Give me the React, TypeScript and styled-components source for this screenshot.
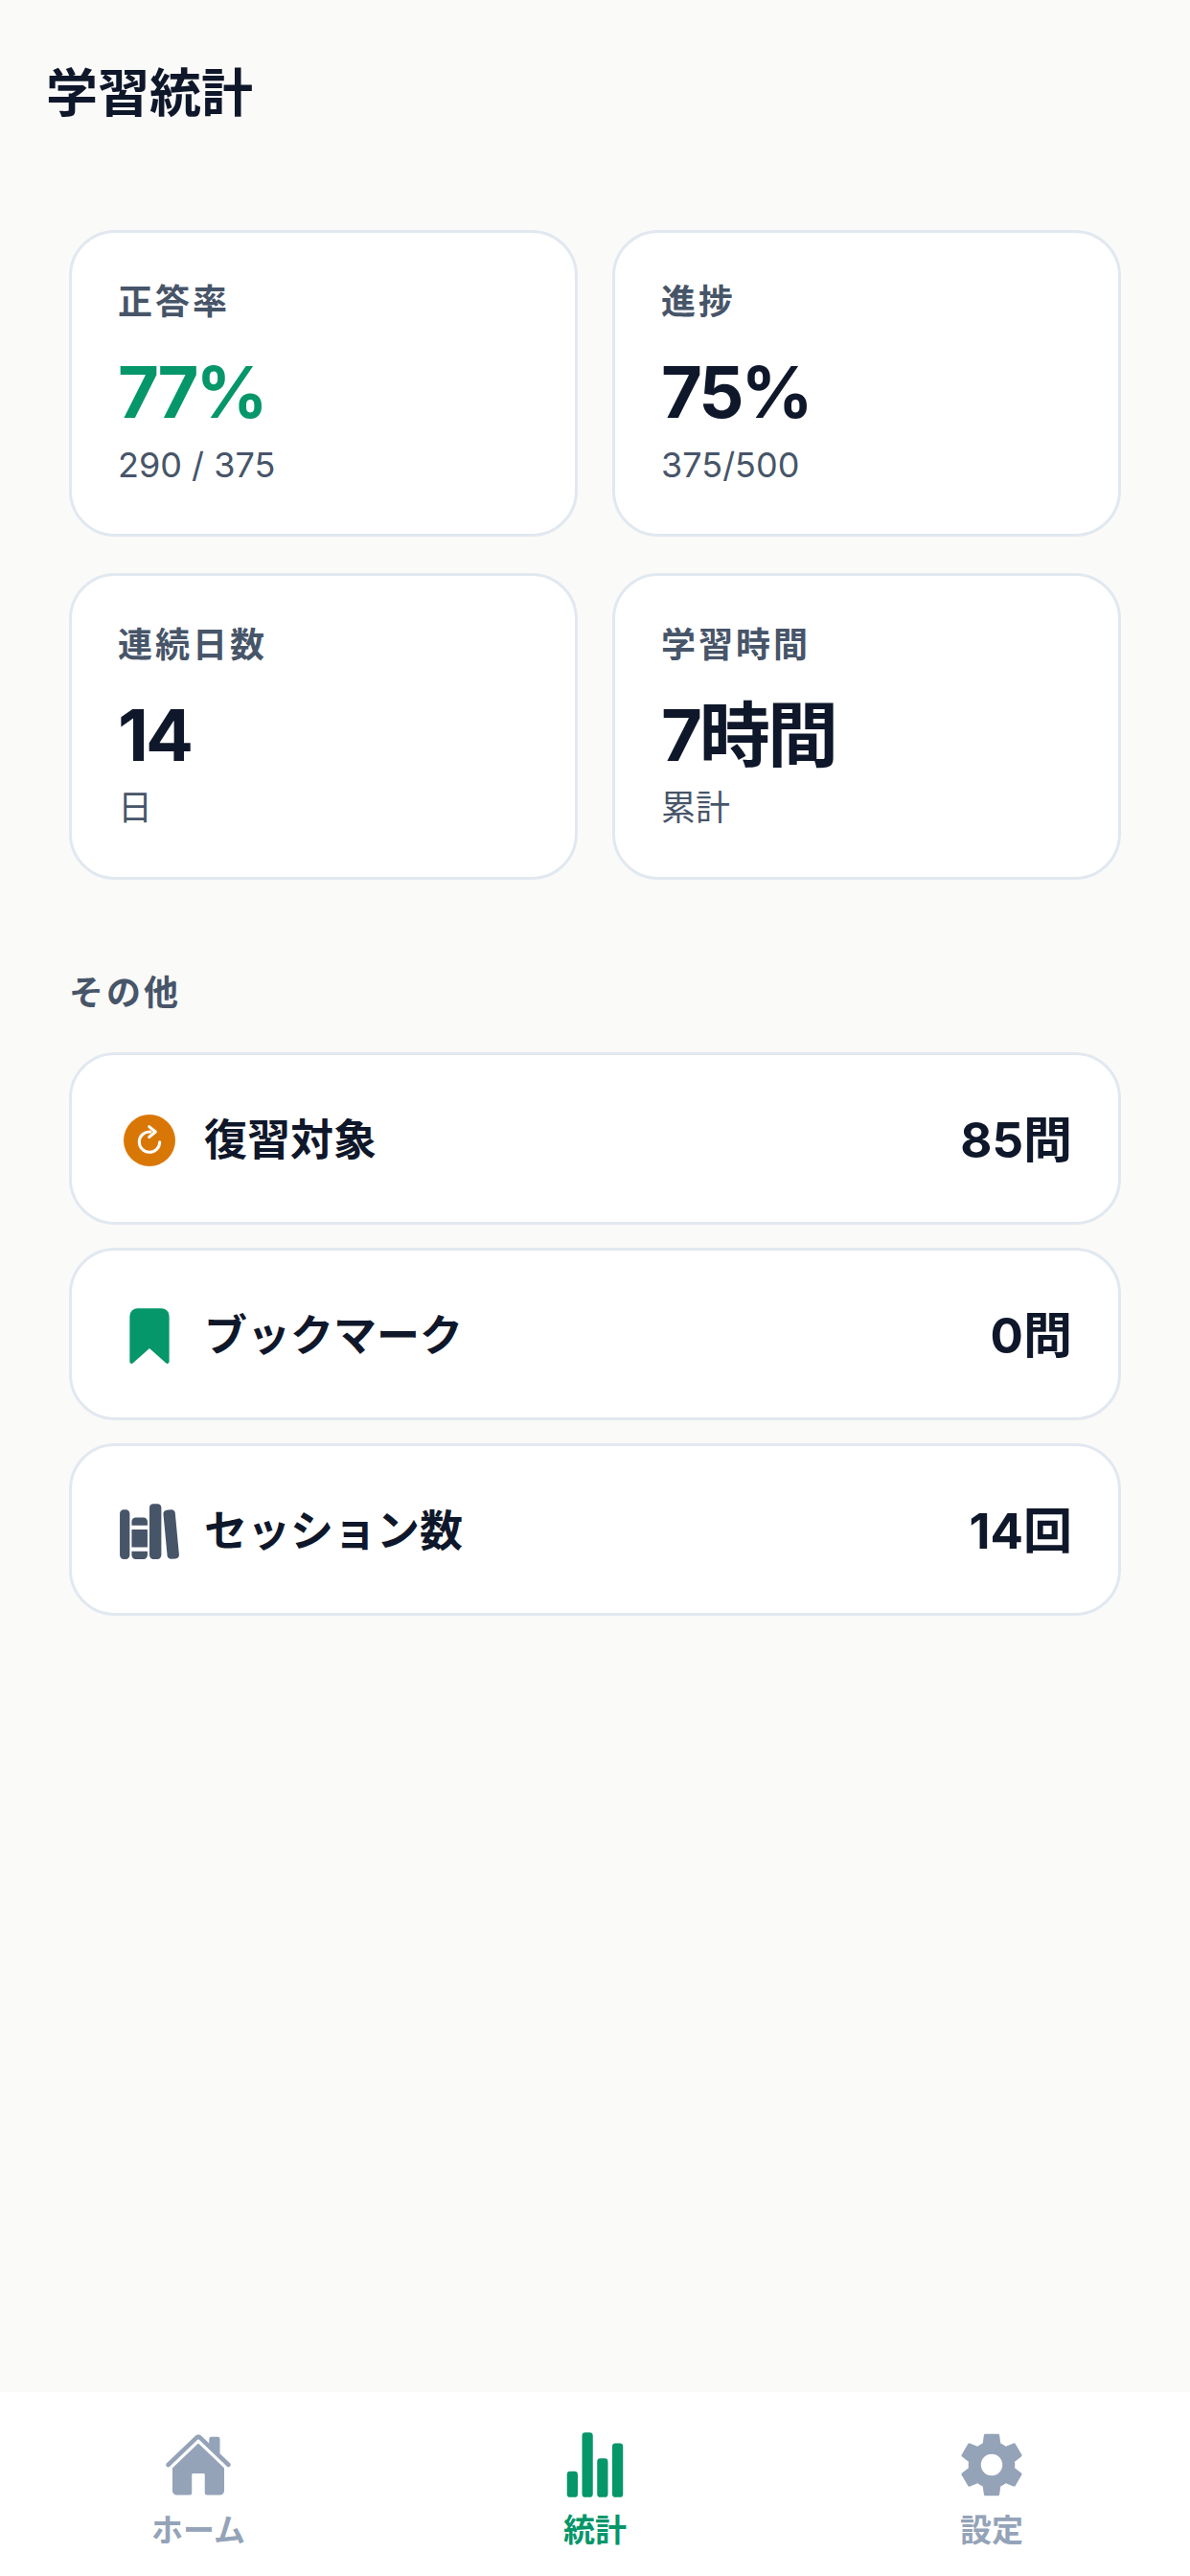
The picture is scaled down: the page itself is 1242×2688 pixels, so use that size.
import React, { FC, ReactNode } from 'react'
import styled, { createGlobalStyle } from 'styled-components'
import {
  IoBookmark,
  IoHome,
  IoLibrary,
  IoSettingsSharp,
  IoStatsChart,
} from 'react-icons/io5'

const GREEN = '#059669'
const INK = '#0F172A'
const SLATE = '#475569'
const MUTED = '#94A3B8'

const GlobalStyle = createGlobalStyle`
  html, body {
    margin: 0;
    padding: 0;
    background: #FAFAF8;
    font-family: Inter, "Noto Sans CJK JP", sans-serif;
  }
  * { box-sizing: border-box; }
`

const Page = styled.div`
  width: 1242px;
  height: 2688px;
  display: flex;
  flex-direction: column;
  background: #fafaf8;
`

const Header = styled.header`
  height: 192px;
  padding: 62px 48px 0 48px;
`

const Title = styled.h1`
  margin: 0;
  font-size: 54px;
  line-height: 72px;
  font-weight: 700;
  color: ${INK};
`

const Main = styled.main`
  flex: 1;
  padding: 48px 72px 0;
`

const StatGrid = styled.div`
  display: grid;
  grid-template-columns: 1fr 1fr;
  gap: 38px 36px;
`

const StatCard = styled.div`
  height: 320px;
  padding: 48px 48px 0;
  background: #fff;
  border: 3px solid #e2e8f0;
  border-radius: 48px;
`

const StatLabel = styled.div`
  font-size: 36px;
  line-height: 48px;
  font-weight: 700;
  letter-spacing: 3px;
  color: ${SLATE};
`

const StatValue = styled.div<{ $accent?: boolean }>`
  margin-top: 22px;
  font-size: 74px;
  line-height: 96px;
  font-weight: 700;
  letter-spacing: -3px;
  color: ${({ $accent }) => ($accent ? GREEN : INK)};
`

const StatSub = styled.div`
  margin-top: 4px;
  font-size: 36px;
  line-height: 48px;
  color: ${SLATE};
`

const SectionTitle = styled.h2`
  margin: 94px 0 38px;
  font-size: 36px;
  line-height: 48px;
  font-weight: 700;
  letter-spacing: 3px;
  color: ${SLATE};
`

const RowList = styled.div`
  display: flex;
  flex-direction: column;
  gap: 24px;
`

const Row = styled.div`
  height: 180px;
  padding: 4px 48px 0;
  display: flex;
  align-items: center;
  background: #fff;
  border: 3px solid #e2e8f0;
  border-radius: 48px;
`

const RowIcon = styled.span<{ $color: string }>`
  width: 66px;
  height: 66px;
  margin-right: 24px;
  display: flex;
  color: ${({ $color }) => $color};
`

const RowLabel = styled.span`
  flex: 1;
  font-size: 45px;
  line-height: 60px;
  font-weight: 700;
  color: ${INK};
`

const RowValue = styled.span`
  font-size: 51px;
  line-height: 60px;
  font-weight: 700;
  color: ${INK};
`

const TabBar = styled.nav`
  height: 192px;
  display: grid;
  grid-template-columns: repeat(3, 1fr);
  background: #fff;
`

const Tab = styled.div<{ $active?: boolean }>`
  padding-top: 40px;
  display: flex;
  flex-direction: column;
  align-items: center;
  color: ${({ $active }) => ($active ? GREEN : MUTED)};
`

const TabIcon = styled.span`
  width: 72px;
  height: 72px;
  display: flex;
`

const TabLabel = styled.span`
  margin-top: 12px;
  font-size: 33px;
  line-height: 40px;
  font-weight: 700;
`

// thin open arrow on a filled disc, the stock filled refresh icon is too heavy here
const ReviewIcon: FC = () => (
  <svg width="66" height="66" viewBox="0 0 66 66">
    <circle cx="33" cy="33" r="27" fill="currentColor" />
    <g fill="none" stroke="#fff" strokeWidth="3" strokeLinecap="round" strokeLinejoin="round">
      <path d="M34 24A10.7 10.7 0 1 0 43.7 34.7" />
      <path d="M32.7 18.7l6.6 5.3-6.6 5.5" />
    </g>
  </svg>
)

const stats = [
  { label: '正答率', value: '77%', sub: '290 / 375', accent: true },
  { label: '進捗', value: '75%', sub: '375/500' },
  { label: '連続日数', value: '14', sub: '日' },
  { label: '学習時間', value: '7時間', sub: '累計' },
]

const rows: { icon: ReactNode; color: string; label: string; value: string }[] = [
  { icon: <ReviewIcon />, color: '#D97706', label: '復習対象', value: '85問' },
  { icon: <IoBookmark size={66} />, color: GREEN, label: 'ブックマーク', value: '0問' },
  { icon: <IoLibrary size={66} />, color: SLATE, label: 'セッション数', value: '14回' },
]

const tabs = [
  { icon: <IoHome size={72} />, label: 'ホーム' },
  { icon: <IoStatsChart size={72} />, label: '統計', active: true },
  { icon: <IoSettingsSharp size={72} />, label: '設定' },
]

const App: FC = () => (
  <Page>
    <GlobalStyle />
    <Header>
      <Title>学習統計</Title>
    </Header>
    <Main>
      <StatGrid>
        {stats.map((s) => (
          <StatCard key={s.label}>
            <StatLabel>{s.label}</StatLabel>
            <StatValue $accent={s.accent}>{s.value}</StatValue>
            <StatSub>{s.sub}</StatSub>
          </StatCard>
        ))}
      </StatGrid>
      <SectionTitle>その他</SectionTitle>
      <RowList>
        {rows.map((r) => (
          <Row key={r.label}>
            <RowIcon $color={r.color}>{r.icon}</RowIcon>
            <RowLabel>{r.label}</RowLabel>
            <RowValue>{r.value}</RowValue>
          </Row>
        ))}
      </RowList>
    </Main>
    <TabBar>
      {tabs.map((t) => (
        <Tab key={t.label} $active={t.active}>
          <TabIcon>{t.icon}</TabIcon>
          <TabLabel>{t.label}</TabLabel>
        </Tab>
      ))}
    </TabBar>
  </Page>
)

export default App
